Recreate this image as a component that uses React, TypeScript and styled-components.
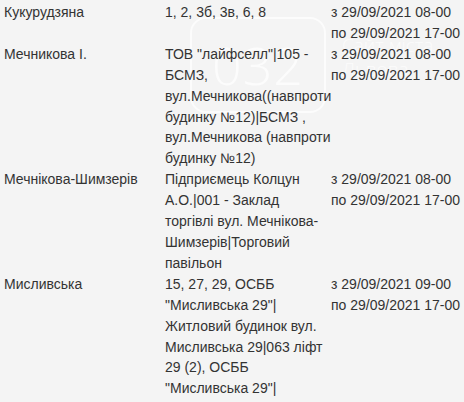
import React from "react";
import styled, { createGlobalStyle } from "styled-components";

const Global = createGlobalStyle`
  html, body {
    margin: 0;
    padding: 0;
    background: #f4f4f4;
  }
  body {
    font-family: "Liberation Sans", Arial, sans-serif;
    font-size: 14px;
    color: #333333;
  }
`;

const Page = styled.div`
  position: relative;
  width: 464px;
  height: 402px;
  overflow: hidden;
  background: #f4f4f4;
  padding: 2px 0 0 4px;
  box-sizing: border-box;
`;

const Table = styled.div`
  position: relative;
  z-index: 1;
  display: flex;
  flex-direction: column;
`;

const Row = styled.div`
  display: grid;
  grid-template-columns: 161px 166px 1fr;
  line-height: 20.9px;
`;

const Cell = styled.div`
  white-space: normal;
  overflow-wrap: normal;
`;

const Watermark = styled.div`
  position: absolute;
  z-index: 0;
  left: 190px;
  top: 17px;
  width: 132px;
  height: 92px;
  border: 2px solid rgba(255, 255, 255, 0.7);
  border-radius: 16px;
  pointer-events: none;
  display: flex;
  align-items: center;
  justify-content: center;
`;

const WatermarkDigits = styled.span`
  font-family: "Open Sans", "Liberation Sans", sans-serif;
  font-weight: 300;
  font-size: 52px;
  line-height: 1;
  color: rgba(255, 255, 255, 0.7);
  letter-spacing: 1px;
`;

const WatermarkCaption = styled.div`
  position: absolute;
  z-index: 0;
  left: 342px;
  top: 33px;
  font-family: "Open Sans", "Liberation Sans", sans-serif;
  font-weight: 300;
  font-size: 19px;
  line-height: 24px;
  color: rgba(255, 255, 255, 0.7);
  pointer-events: none;
`;

type Entry = { street: string; houses: string; period: string[] };

const entries: Entry[] = [
  {
    street: "Кукурудзяна",
    houses: "1, 2, 3б, 3в, 6, 8",
    period: ["з 29/09/2021 08-00", "по 29/09/2021 17-00"],
  },
  {
    street: "Мечникова І.",
    houses:
      'ТОВ "лайфселл"|105 - БСМЗ, вул.Мечникова((навпроти будинку №12)|БСМЗ , вул.Мечникова (навпроти будинку №12)',
    period: ["з 29/09/2021 08-00", "по 29/09/2021 17-00"],
  },
  {
    street: "Мечнікова-Шимзерів",
    houses:
      "Підприємець Колцун А.О.|001 - Заклад торгівлі вул. Мечнікова-Шимзерів|Торговий павільон",
    period: ["з 29/09/2021 08-00", "по 29/09/2021 17-00"],
  },
  {
    street: "Мисливська",
    houses:
      '15, 27, 29, ОСББ "Мисливська 29"| Житловий будинок вул. Мисливська 29|063 ліфт 29 (2), ОСББ "Мисливська 29"|',
    period: ["з 29/09/2021 09-00", "по 29/09/2021 17-00"],
  },
];

export default function App() {
  return (
    <>
      <Global />
      <Page>
        <Watermark>
          <WatermarkDigits>032</WatermarkDigits>
        </Watermark>
        <WatermarkCaption>
          Сайт міста
          <br />
          Львова
        </WatermarkCaption>
        <Table>
          {entries.map((e) => (
            <Row key={e.street}>
              <Cell>{e.street}</Cell>
              <Cell>{e.houses}</Cell>
              <Cell>
                {e.period.map((p) => (
                  <div key={p}>{p}</div>
                ))}
              </Cell>
            </Row>
          ))}
        </Table>
      </Page>
    </>
  );
}
